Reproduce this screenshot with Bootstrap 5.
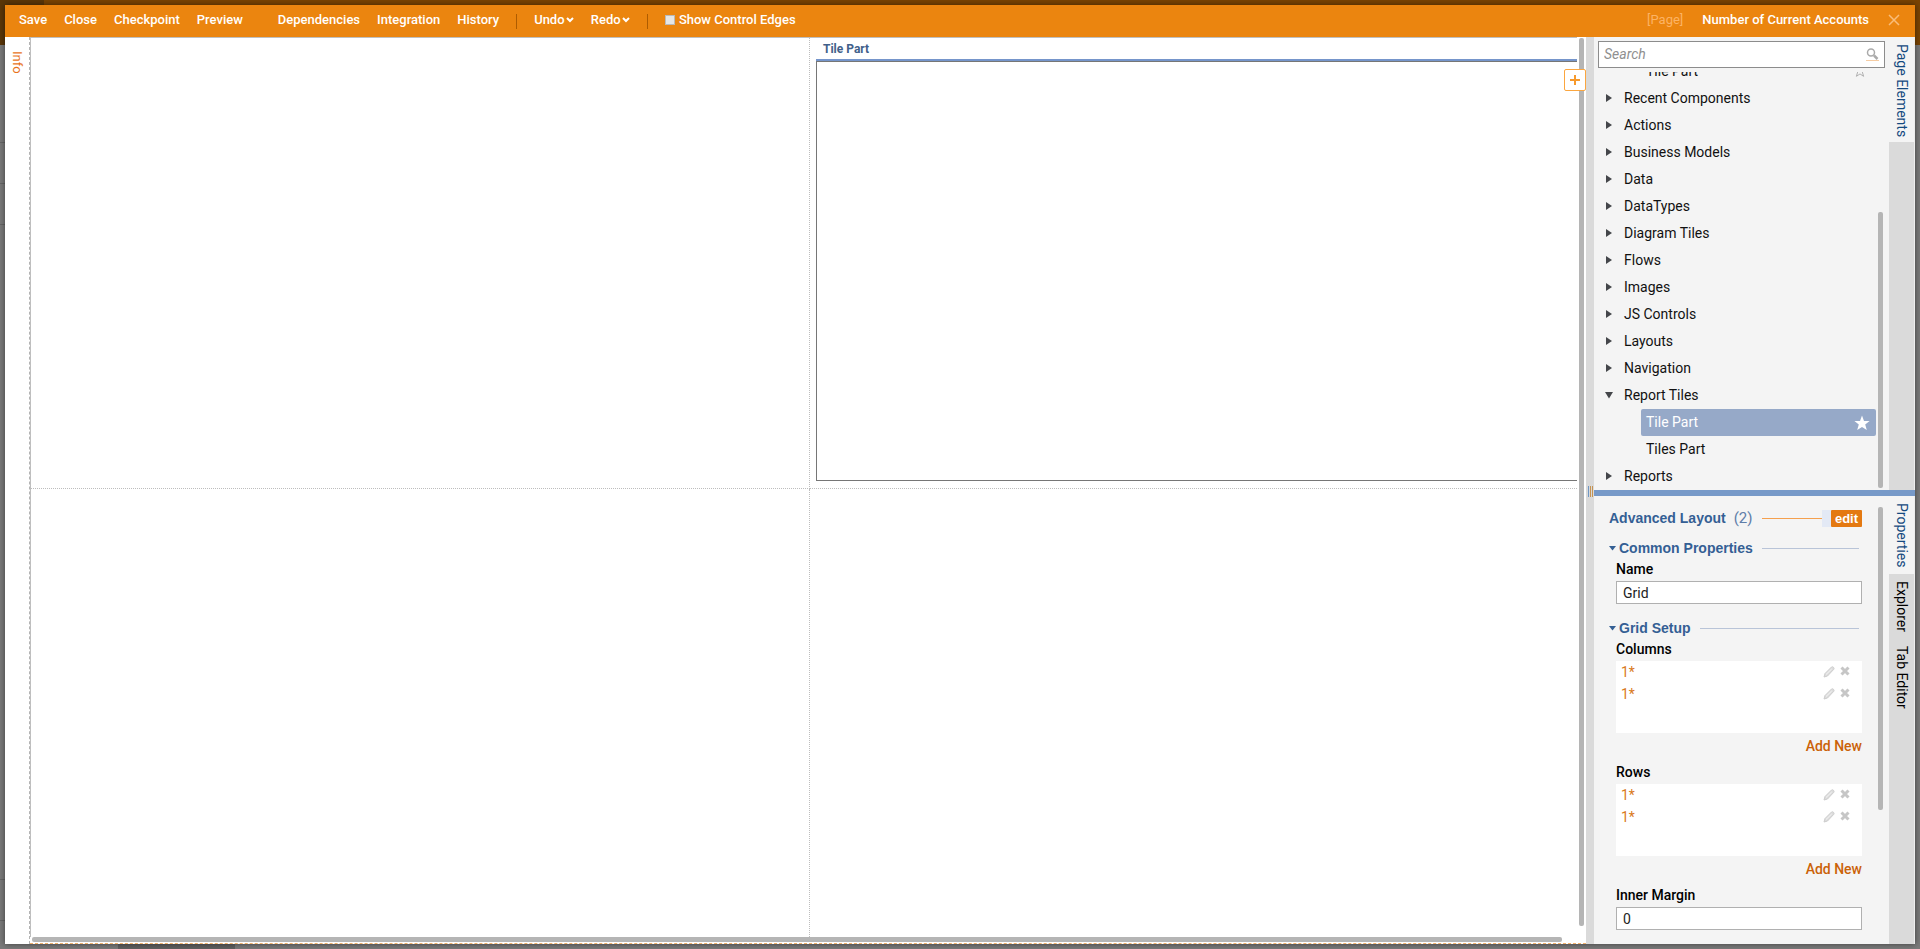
<!DOCTYPE html>
<html lang="en">
<head>
<meta charset="utf-8">
<meta name="viewport" content="width=device-width, initial-scale=1">
<title>Number of Current Accounts</title>
<link href="https://cdn.jsdelivr.net/npm/bootstrap@5.3.0/dist/css/bootstrap.min.css" rel="stylesheet">
<style>
  :root { --panel: #f4f4f4; --rail: #dadada; --thumb: #b5b5b5; --navy: #345f94; --orange: #eb850f; }
  body { font-family: Roboto, "Liberation Sans", sans-serif; font-size: 14px; line-height: 20px; color: #111; background: #777; }
  button, input { font: inherit; color: inherit; }
  button { background: none; border: 0; padding: 0; }
  /* dimmed page behind the designer */
  .backdrop-page { height: 100vh; padding: 5px;
    background:
      linear-gradient(#5a3608, #5a3608) 0 0 / 44px 45px no-repeat,
      linear-gradient(#7a4403, #7a4403) 0 0 / 100% 45px no-repeat,
      linear-gradient(#666, #666) 0 142px / 5px 1px no-repeat,
      linear-gradient(#666, #666) 0 183px / 5px 1px no-repeat,
      linear-gradient(#666, #666) 0 224px / 5px 1px no-repeat,
      linear-gradient(#666, #666) 0 879px / 5px 1px no-repeat,
      linear-gradient(#666, #666) 0 920px / 5px 1px no-repeat,
      linear-gradient(#606060, #606060) 118px 100% / 117px 5px no-repeat,
      #7a7a7a; }
  .designer { box-shadow: 0 0 6px rgba(0,0,0,.5); background: #fff; }
  .toolbar { height: 32px; padding: 0 14px 3px; gap: 17px; background: var(--orange); color: #fff; font-size: 13px; font-weight: 500; }
  .toolbar .sep { width: 1px; height: 15px; background: #ae5c00; margin-top: 3px; }
  .toolbar .later { margin-left: 18px; }
  .toolbar .menu-caret { margin-left: -2px; }
  .toolbar input { appearance: none; width: 10px; height: 10px; background: #e6e6e6; border: 1px solid #b9b9b9; }
  .kind { color: #fcb364; font-weight: 400; margin-right: 2px; }
  .vtext { writing-mode: vertical-rl; }
  .info-rail { width: 25px; border-right: 1px dashed #b4b4b4; }
  .info-rail button { color: #e8731a; padding: 14px 0 0; width: 24px; font-size: 13px; }
  .stage { border-bottom: 1px dashed #efb06c; }
  .view { border-left: 1px solid #bfbfbf; border-top: 1px solid #bfbfbf; }
  .board { display: grid; grid-template: 1fr 1fr / 1fr 1fr; width: calc(100% + 12px); height: calc(100% + 2px); }
  .board > div { min-width: 0; }
  .cell-e { border-right: 1px dotted #bdbdbd; }
  .cell-s { border-bottom: 1px dotted #bdbdbd; }
  .tile-cell { padding: 0 0 7px 6px; }
  .tile-title { height: 21px; padding: 1px 0 0 7px; font-size: 12px; font-weight: 700; color: #41608a; }
  .tile-box { border: 1px solid #767676; box-shadow: 0 -2px 0 #7595cb; margin-top: 2px; }
  .vbar { width: 9px; padding: 1px 2px 11px; }
  .hbar { height: 6px; padding: 0 24px 1px 2px; }
  .thumb { background: var(--thumb); border-radius: 2px; }
  .add { top: 32px; right: 0; width: 22px; height: 22px; background: #fff; border: 1px solid #fba640; border-radius: 2px; }
  .splitter { width: 8px; background: var(--rail); padding-top: 449px; }
  .grip { height: 11px; width: 5px; border-left: 1px solid #6f97c4; border-right: 1px solid #c59352; background: linear-gradient(90deg, transparent 1px, #c59352 1px, #c59352 2px, transparent 2px); }
  .side { width: 321px; background: var(--panel); }
  .half-top { height: 453px; }
  .blue-bar { height: 6px; background: #7799c8; }
  .rail { width: 26px; background: var(--rail); border-right: 1px solid #eee; font-size: 14px; }
  .rail button { width: 25px; text-align: start; padding: 7px 0; color: #000; white-space: nowrap; }
  .rail button.on { background: var(--panel); color: #154a80; }
  .rail .lone { padding-bottom: 5px; }
  .search { height: 27px; margin: 4px; border: 1px solid #8c8c8c; background: #fff; padding: 0 5px 1px; }
  .search input { border: 0; outline: 0; min-width: 0; font-style: italic; background: none; }
  .search input::placeholder { color: #8f8f8f; opacity: 1; }
  .tree li { height: 27px; flex: none; }
  .tree button { height: 27px; }
  .tree .arrow { width: 10px; height: 10px; margin: 0 10px 0 9px; }
  .tree .node { padding: 0 0 2px 1px; }
  .tree .leaf { margin-left: 47px; width: 235px; padding: 0 6px 2px 5px; border-radius: 2px; }
  .tree .leaf.on { background: #96a9c8; color: #fff; }
  .tree .leaf.on svg { margin-top: 2px; }
  .sbar { width: 13px; padding: 0 6px 0 2px; }
  .tree-bar { padding-top: 140px; padding-bottom: 2px; margin-left: -2px; }
  .prop-bar { padding-top: 11px; padding-bottom: 134px; }
  .props { padding: 12px 6px 0 15px; }
  .heading { font: 700 14px/20px "Liberation Sans", Arial, sans-serif; color: var(--navy); }
  .heading .count { font: 400 15px/20px Roboto, sans-serif; color: #5e7da8; margin-left: 8px; }
  .heading .fold { margin-right: 3px; }
  .group-first { margin-top: 10px; }
  .group-next { margin-top: 14px; }
  .rule { height: 1px; background: #b9c4d8; margin: 0 3px 0 9px; }
  .title-rule { background: #f5a04e; margin: 0 0 0 9px; }
  .edit-wrap { border-left: 9px solid #e3e9f5; }
  .edit-wrap button { background: #e47911; color: #fff; font: 700 13px/17px "Liberation Sans", sans-serif; width: 31px; border-radius: 1px; }
  .body-pad { padding-left: 7px; }
  .body-pad label, .list-name { font-weight: 500; color: #000; line-height: 22px; margin-bottom: 1px; }
  .body-pad input { height: 23px; border: 1px solid #b0b0b0; background: #fff; padding: 0 6px; color: #222; border-radius: 0; }
  .tracks { height: 72px; background: #fff; padding: 0 12px 0 5px; color: #d97a20; }
  .tracks li { height: 22px; }
  .tracks li span { gap: 5px; }
  .add-new { color: #cb6208; font-weight: 500; text-decoration: none; height: 26px; line-height: 26px; }
  .list-block { margin-bottom: 2px; }
</style>
</head>
<body>
<svg width="0" height="0" class="position-absolute" aria-hidden="true">
  <symbol id="right" viewBox="0 0 10 10"><path d="M2 1l6 4-6 4z" fill="#44464a"/></symbol>
  <symbol id="down" viewBox="0 0 10 10"><path d="M1 2h8L5 8.500z" fill="#44464a"/></symbol>
  <symbol id="caret" viewBox="0 0 8 8"><path d="M1 2l3 3 3-3" fill="none" stroke="#fff" stroke-width="2"/></symbol>
  <symbol id="tri" viewBox="0 0 7 5"><path d="M0 0h7L3.500 4.500z" fill="#345f94"/></symbol>
  <symbol id="star" viewBox="0 0 16 16"><path d="M8 .6l2 5.300 5.600.2-4.400 3.500 1.600 5.500L8 11.900l-4.800 3.200 1.600-5.500L.4 6.100 6 5.900z"/></symbol>
  <symbol id="pencil" viewBox="0 0 12 12"><path d="M1 11l1-3.500L8.500 1q1-.7 2 .3t.3 2L4.500 10z" fill="#dcdcdc" stroke="#cdcdcd"/><path d="M3 8.500L8.700 3" stroke="#f4f4f4"/></symbol>
  <symbol id="cross" viewBox="0 0 10 10"><path d="M1.500 1.500l7 7m0-7l-7 7" stroke="#c6c6c6" stroke-width="3"/></symbol>
</svg>
<div class="backdrop-page">
<div class="designer d-flex flex-column h-100">
  <header class="toolbar d-flex align-items-center flex-shrink-0">
    <button type="button">Save</button>
    <button type="button">Close</button>
    <button type="button">Checkpoint</button>
    <button type="button">Preview</button>
    <button type="button" class="later">Dependencies</button>
    <button type="button">Integration</button>
    <button type="button">History</button>
    <span class="sep"></span>
    <button type="button">Undo <svg width="8" height="8" class="menu-caret"><use href="#caret"/></svg></button>
    <button type="button">Redo <svg width="8" height="8" class="menu-caret"><use href="#caret"/></svg></button>
    <span class="sep"></span>
    <label class="d-flex align-items-center gap-1"><input type="checkbox">Show Control Edges</label>
    <span class="kind ms-auto">[Page]</span>
    <span>Number of Current Accounts</span>
    <button type="button" class="d-flex" aria-label="Close designer"><svg width="15" height="12" viewBox="0 0 15 12"><path d="M3 1l10 10M13 1L3 11" stroke="#f9bd7a" stroke-width="1.500"/></svg></button>
  </header>
  <div class="d-flex flex-fill overflow-hidden">
    <nav class="info-rail flex-shrink-0"><button type="button" class="vtext text-start">Info</button></nav>
    <main class="stage position-relative d-flex flex-column flex-fill overflow-hidden">
      <div class="d-flex flex-fill overflow-hidden">
        <div class="view flex-fill overflow-hidden">
          <div class="board">
            <div class="cell-e cell-s"></div>
            <section class="tile-cell cell-s d-flex flex-column">
              <div class="tile-title">Tile Part</div>
              <div class="tile-box flex-fill"></div>
            </section>
            <div class="cell-e"></div>
            <div></div>
          </div>
        </div>
        <div class="vbar d-flex flex-shrink-0"><div class="thumb flex-fill"></div></div>
      </div>
      <div class="hbar d-flex flex-shrink-0"><div class="thumb flex-fill"></div></div>
      <button type="button" class="add position-absolute d-flex align-items-center justify-content-center" aria-label="Add"><svg width="10" height="10"><path d="M5 0v10M0 5h10" stroke="#f79a2c" stroke-width="2"/></svg></button>
    </main>
    <div class="splitter d-flex flex-column align-items-center flex-shrink-0"><div class="grip flex-shrink-0"></div></div>
    <aside class="side d-flex flex-column flex-shrink-0 overflow-hidden">
      <div class="half-top d-flex flex-shrink-0">
        <div class="d-flex flex-column flex-fill overflow-hidden">
          <div class="search d-flex align-items-center flex-shrink-0">
            <input type="text" class="flex-fill p-0" placeholder="Search" aria-label="Search">
            <svg width="13" height="13" viewBox="0 0 13 13"><circle cx="5" cy="4.500" r="3.500" fill="none" stroke="#aaa" stroke-width="1.500"/><path d="M8 7.500l3.500 3.500" stroke="#aaa" stroke-width="2.500"/><path d="M0 12.500h13" stroke="#f6cda4"/></svg>
          </div>
          <div class="d-flex flex-fill overflow-hidden">
            <ul class="tree list-unstyled mb-0 d-flex flex-column justify-content-end flex-fill overflow-hidden">
              <li><button type="button" class="leaf d-flex align-items-center justify-content-between">Tile Part<svg width="12" height="12" viewBox="0 0 16 16" fill="none" stroke="#999" class="me-1"><use href="#star"/></svg></button></li>
              <li><button type="button" class="node d-flex align-items-center"><svg class="arrow"><use href="#right"/></svg>Recent Components</button></li>
              <li><button type="button" class="node d-flex align-items-center"><svg class="arrow"><use href="#right"/></svg>Actions</button></li>
              <li><button type="button" class="node d-flex align-items-center"><svg class="arrow"><use href="#right"/></svg>Business Models</button></li>
              <li><button type="button" class="node d-flex align-items-center"><svg class="arrow"><use href="#right"/></svg>Data</button></li>
              <li><button type="button" class="node d-flex align-items-center"><svg class="arrow"><use href="#right"/></svg>DataTypes</button></li>
              <li><button type="button" class="node d-flex align-items-center"><svg class="arrow"><use href="#right"/></svg>Diagram Tiles</button></li>
              <li><button type="button" class="node d-flex align-items-center"><svg class="arrow"><use href="#right"/></svg>Flows</button></li>
              <li><button type="button" class="node d-flex align-items-center"><svg class="arrow"><use href="#right"/></svg>Images</button></li>
              <li><button type="button" class="node d-flex align-items-center"><svg class="arrow"><use href="#right"/></svg>JS Controls</button></li>
              <li><button type="button" class="node d-flex align-items-center"><svg class="arrow"><use href="#right"/></svg>Layouts</button></li>
              <li><button type="button" class="node d-flex align-items-center"><svg class="arrow"><use href="#right"/></svg>Navigation</button></li>
              <li><button type="button" class="node d-flex align-items-center"><svg class="arrow"><use href="#down"/></svg>Report Tiles</button></li>
              <li><button type="button" class="leaf on d-flex align-items-center justify-content-between">Tile Part<svg width="16" height="16" fill="#fff"><use href="#star"/></svg></button></li>
              <li><button type="button" class="leaf d-flex align-items-center">Tiles Part</button></li>
              <li><button type="button" class="node d-flex align-items-center"><svg class="arrow"><use href="#right"/></svg>Reports</button></li>
            </ul>
            <div class="sbar tree-bar d-flex flex-shrink-0"><div class="thumb flex-fill"></div></div>
          </div>
        </div>
        <nav class="rail flex-shrink-0"><button type="button" class="vtext on lone">Page Elements</button></nav>
      </div>
      <div class="blue-bar flex-shrink-0"></div>
      <div class="d-flex flex-fill overflow-hidden">
        <div class="props flex-fill overflow-hidden">
          <div class="d-flex align-items-center pe-2">
            <div class="heading">Advanced Layout<span class="count">(2)</span></div>
            <div class="rule title-rule flex-fill"></div>
            <div class="edit-wrap d-flex"><button type="button">edit</button></div>
          </div>
          <div class="heading group-first d-flex align-items-center pe-2"><svg width="7" height="5" class="fold"><use href="#tri"/></svg>Common Properties<span class="rule flex-fill"></span></div>
          <div class="body-pad pe-2">
            <label for="name" class="d-block">Name</label>
            <input id="name" type="text" class="d-block w-100" value="Grid">
          </div>
          <div class="heading group-next d-flex align-items-center pe-2"><svg width="7" height="5" class="fold"><use href="#tri"/></svg>Grid Setup<span class="rule flex-fill"></span></div>
          <div class="body-pad pe-2">
            <div class="list-block">
              <div class="list-name">Columns</div>
              <ul class="tracks list-unstyled mb-0">
                <li class="d-flex align-items-center">1*<span class="ms-auto d-flex"><button type="button" class="d-flex" aria-label="Edit"><svg width="12" height="12"><use href="#pencil"/></svg></button><button type="button" class="d-flex" aria-label="Remove"><svg width="10" height="10"><use href="#cross"/></svg></button></span></li>
                <li class="d-flex align-items-center">1*<span class="ms-auto d-flex"><button type="button" class="d-flex" aria-label="Edit"><svg width="12" height="12"><use href="#pencil"/></svg></button><button type="button" class="d-flex" aria-label="Remove"><svg width="10" height="10"><use href="#cross"/></svg></button></span></li>
              </ul>
              <a href="#" class="add-new d-block text-end">Add New</a>
            </div>
            <div class="list-block">
              <div class="list-name">Rows</div>
              <ul class="tracks list-unstyled mb-0">
                <li class="d-flex align-items-center">1*<span class="ms-auto d-flex"><button type="button" class="d-flex" aria-label="Edit"><svg width="12" height="12"><use href="#pencil"/></svg></button><button type="button" class="d-flex" aria-label="Remove"><svg width="10" height="10"><use href="#cross"/></svg></button></span></li>
                <li class="d-flex align-items-center">1*<span class="ms-auto d-flex"><button type="button" class="d-flex" aria-label="Edit"><svg width="12" height="12"><use href="#pencil"/></svg></button><button type="button" class="d-flex" aria-label="Remove"><svg width="10" height="10"><use href="#cross"/></svg></button></span></li>
              </ul>
              <a href="#" class="add-new d-block text-end">Add New</a>
            </div>
            <label for="margin" class="d-block">Inner Margin</label>
            <input id="margin" type="text" class="d-block w-100" value="0">
          </div>
        </div>
        <div class="sbar prop-bar d-flex flex-shrink-0"><div class="thumb flex-fill"></div></div>
        <nav class="rail d-flex flex-column flex-shrink-0">
          <button type="button" class="vtext on">Properties</button>
          <button type="button" class="vtext">Explorer</button>
          <button type="button" class="vtext">Tab Editor</button>
        </nav>
      </div>
    </aside>
  </div>
</div>
</div>
<script src="https://cdn.jsdelivr.net/npm/bootstrap@5.3.0/dist/js/bootstrap.bundle.min.js"></script>
</body>
</html>
